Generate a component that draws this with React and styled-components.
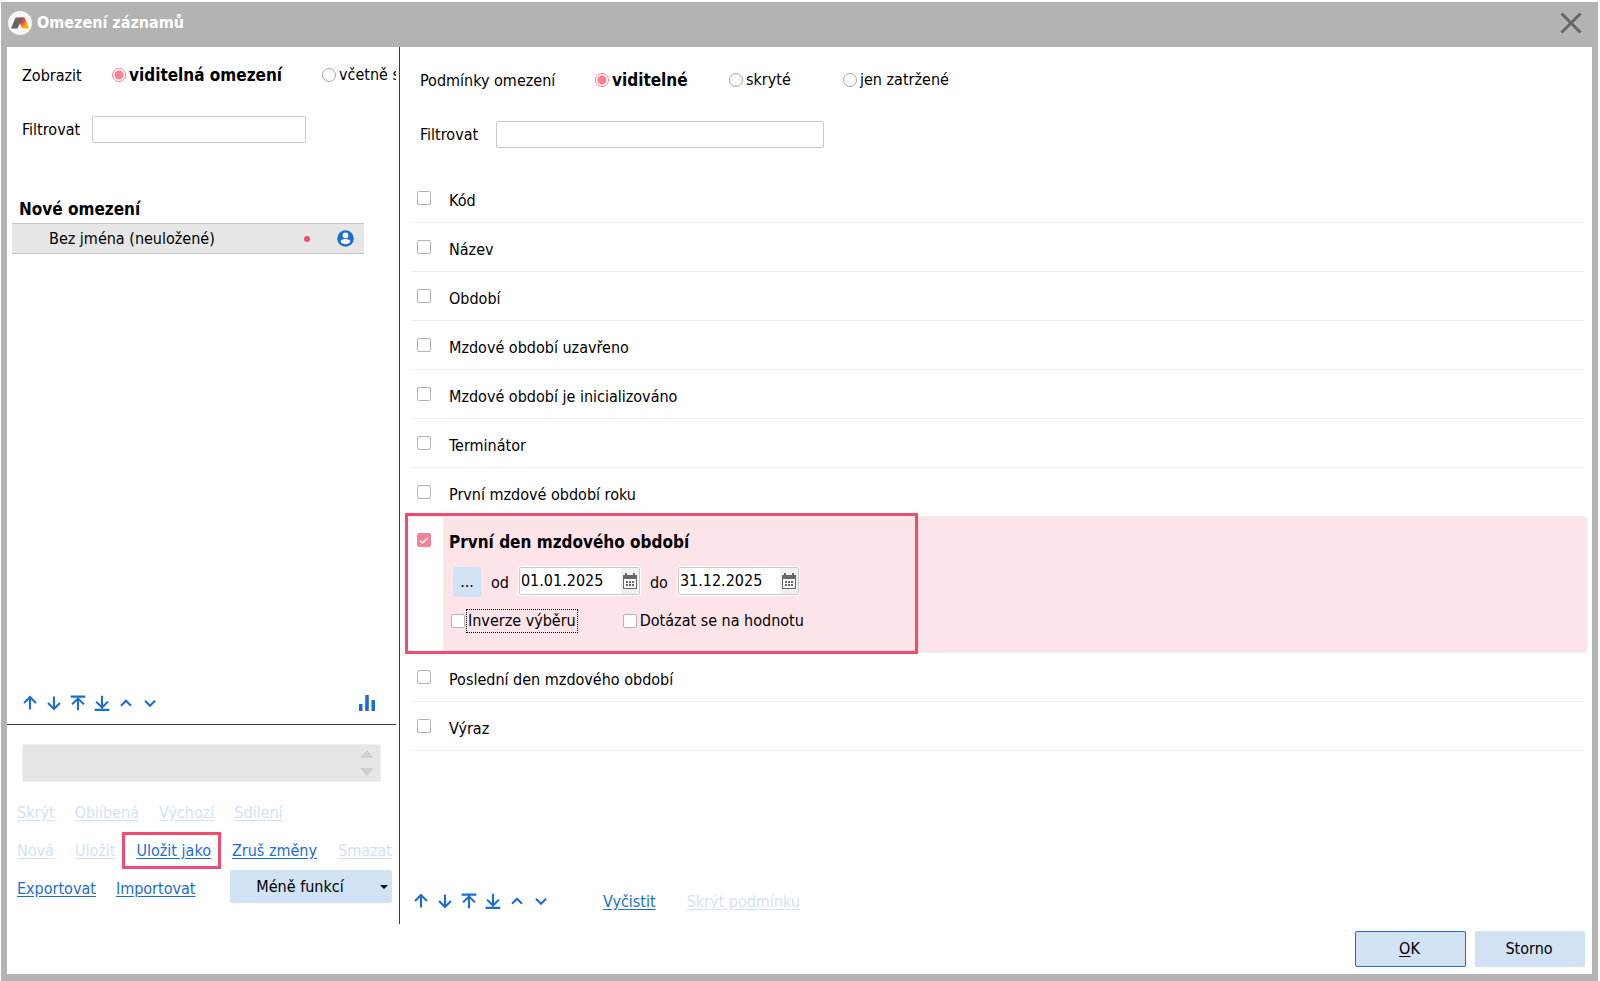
import React, { useState } from 'react';
import styled, { createGlobalStyle } from 'styled-components';

const conditionsBefore = [
  'Kód',
  'Název',
  'Období',
  'Mzdové období uzavřeno',
  'Mzdové období je inicializováno',
  'Terminátor',
  'První mzdové období roku',
];
const conditionsAfter = ['Poslední den mzdového období', 'Výraz'];

const moveIcons = [
  { name: 'Nahoru', d: 'M12 19V6M5.5 12 12 5.5 18.5 12' },
  { name: 'Dolů', d: 'M12 5v13M5.5 12l6.5 6.5 6.5-6.5' },
  { name: 'Na začátek', d: 'M4 5h16M12 20V7M5.5 13.5 12 7l6.5 6.5' },
  { name: 'Na konec', d: 'M4 19.5h16M12 4v13M5.5 10.5 12 17l6.5-6.5' },
  { name: 'Sbalit', d: 'M6.5 15l5.5-5.5 5.5 5.5' },
  { name: 'Rozbalit', d: 'M6.5 9.5l5.5 5.5 5.5-5.5' },
];

function MoveButtons() {
  return (
    <MoveGroup>
      {moveIcons.map((icon) => (
        <IconButton type="button" key={icon.name} aria-label={icon.name}>
          <svg width="22" height="22" viewBox="0 0 24 24" fill="none" stroke="#1c6dd0" strokeWidth="2.3">
            <path d={icon.d} />
          </svg>
        </IconButton>
      ))}
    </MoveGroup>
  );
}

function RadioOption({ name, label, value, onChange }) {
  return (
    <RadioLabel $active={value === label}>
      <Radio
        type="radio"
        name={name}
        checked={value === label}
        onChange={() => onChange(label)}
      />
      <span>{label}</span>
    </RadioLabel>
  );
}

function Condition({ label }) {
  return (
    <ConditionRow>
      <CheckLabel>
        <Checkbox type="checkbox" />
        <ConditionName>{label}</ConditionName>
      </CheckLabel>
    </ConditionRow>
  );
}

function DateField({ label, defaultValue }) {
  return (
    <DateBox>
      <DateInput type="text" aria-label={label} defaultValue={defaultValue} />
      <CalendarButton type="button" aria-label="Kalendář">
        <svg width="14" height="16" viewBox="0 0 14 16" shapeRendering="crispEdges">
          <path d="M0 2h14v14H0z" fill="#666" />
          <path d="M2 0h2v3H2zM10 0h2v3h-2z" fill="#666" />
          <path d="M1 6h12v9H1z" fill="#f7f7f7" />
          <path
            d="M3 8h2v2H3zM6 8h2v2H6zM9 8h2v2H9zM3 11h2v2H3zM6 11h2v2H6zM9 11h2v2H9z"
            fill="#666"
          />
        </svg>
      </CalendarButton>
    </DateBox>
  );
}

function SavedFilters() {
  const [view, setView] = useState('viditelná omezení');
  return (
    <Sidebar>
      <SideOptions>
        <span>Zobrazit</span>
        <RadioOption name="view" label="viditelná omezení" value={view} onChange={setView} />
        <RadioOption name="view" label="včetně s" value={view} onChange={setView} />
      </SideOptions>
      <SideFilter>
        <label htmlFor="filter-side">Filtrovat</label>
        <TextInput id="filter-side" type="text" />
      </SideFilter>
      <GroupTitle>Nové omezení</GroupTitle>
      <FilterItem>
        <FilterName>Bez jména (neuložené)</FilterName>
        <UnsavedDot />
        <svg width="17" height="17" viewBox="0 0 17 17">
          <circle cx="8.5" cy="8.5" r="8.3" fill="#1c6dd0" />
          <circle cx="8.5" cy="5.4" r="2.8" fill="#fff" />
          <path d="M3.6 11.6c0-1.6 2.2-2.5 4.9-2.5s4.9.9 4.9 2.5c-1 1.7-2.8 2.7-4.9 2.7s-3.9-1-4.9-2.7z" fill="#fff" />
        </svg>
      </FilterItem>
      <SideToolbar>
        <MoveButtons />
        <IconButton type="button" aria-label="Graf">
          <svg width="16" height="16" viewBox="0 0 16 16" fill="#1c6dd0">
            <path d="M0 9h3.500v7H0zM6.200 0h3.600v16H6.200zM12.500 5H16v11h-3.500z" />
          </svg>
        </IconButton>
      </SideToolbar>
      <NoteBox>
        <Note aria-label="Poznámka" disabled />
        <Spinner>
          <svg width="14" height="8" viewBox="0 0 14 8">
            <path d="M7 0l7 8H0z" fill="#cfcfcf" />
          </svg>
          <svg width="14" height="8" viewBox="0 0 14 8">
            <path d="M7 8L0 0h14z" fill="#cfcfcf" />
          </svg>
        </Spinner>
      </NoteBox>
      <LinkRows>
        <LinkRow>
          <ActionLink href="#skryt" $muted>Skrýt</ActionLink>
          <ActionLink href="#oblibena" $muted>Oblíbená</ActionLink>
          <ActionLink href="#vychozi" $muted>Výchozí</ActionLink>
          <ActionLink href="#sdileni" $muted>Sdílení</ActionLink>
        </LinkRow>
        <LinkRow $wide>
          <ActionLink href="#nova" $muted>Nová</ActionLink>
          <ActionLink href="#ulozit" $muted>Uložit</ActionLink>
          <MarkedLink href="#ulozit-jako">Uložit jako</MarkedLink>
          <ActionLink href="#zrus">Zruš změny</ActionLink>
          <ActionLink href="#smazat" $muted>Smazat</ActionLink>
        </LinkRow>
        <LinkRow>
          <ActionLink href="#export">Exportovat</ActionLink>
          <ActionLink href="#import">Importovat</ActionLink>
          <MenuButton type="button">
            <span>Méně funkcí</span>
            <svg width="8" height="4" viewBox="0 0 8 4">
              <path d="M0 0h8L4 4z" />
            </svg>
          </MenuButton>
        </LinkRow>
      </LinkRows>
    </Sidebar>
  );
}

function Conditions() {
  const [shown, setShown] = useState('viditelné');
  const [enabled, setEnabled] = useState(true);
  return (
    <Main>
      <MainOptions>
        <span>Podmínky omezení</span>
        <RadioOption name="shown" label="viditelné" value={shown} onChange={setShown} />
        <RadioOption name="shown" label="skryté" value={shown} onChange={setShown} />
        <RadioOption name="shown" label="jen zatržené" value={shown} onChange={setShown} />
      </MainOptions>
      <MainFilter>
        <label htmlFor="filter-main">Filtrovat</label>
        <TextInput id="filter-main" type="text" />
      </MainFilter>
      <ConditionList>
        {conditionsBefore.map((label) => (
          <Condition key={label} label={label} />
        ))}
        <SelectedRow>
          <Checkbox
            id="first-day"
            type="checkbox"
            checked={enabled}
            onChange={(e) => setEnabled(e.target.checked)}
          />
          <SelectedBody>
            <SelectedName htmlFor="first-day">První den mzdového období</SelectedName>
            <DateRow>
              <MoreButton type="button">...</MoreButton>
              <span>od</span>
              <DateField label="od" defaultValue="01.01.2025" />
              <span>do</span>
              <DateField label="do" defaultValue="31.12.2025" />
            </DateRow>
            <ChoiceRow>
              <ChoiceLabel $focused>
                <Checkbox type="checkbox" />
                <span>Inverze výběru</span>
              </ChoiceLabel>
              <ChoiceLabel>
                <Checkbox type="checkbox" />
                <span>Dotázat se na hodnotu</span>
              </ChoiceLabel>
            </ChoiceRow>
          </SelectedBody>
        </SelectedRow>
        {conditionsAfter.map((label) => (
          <Condition key={label} label={label} />
        ))}
      </ConditionList>
      <MainToolbar>
        <MoveButtons />
        <MainLinks>
          <ActionLink href="#vycistit">Vyčistit</ActionLink>
          <ActionLink href="#skryt-podminku" $muted>Skrýt podmínku</ActionLink>
        </MainLinks>
      </MainToolbar>
    </Main>
  );
}

export default function App() {
  return (
    <Page>
      <GlobalStyle />
      <Dialog>
        <TitleBar>
          <svg width="24" height="24" viewBox="0 0 24 24">
            <defs>
              <linearGradient id="leg" x1="0" y1="0" x2="1" y2="1">
                <stop offset="0" stopColor="#c8107a" />
                <stop offset="0.4" stopColor="#ee4a3c" />
                <stop offset="0.7" stopColor="#fbb000" />
                <stop offset="1" stopColor="#fbb000" />
              </linearGradient>
            </defs>
            <circle cx="12" cy="12" r="12" fill="#f8f8f8" />
            <path d="M12 6.500h4.500L21 17.500h-6.500L11 11z" fill="url(#leg)" />
            <path d="M7.500 6.500h7L9.500 17.500H3z" fill="#666" />
          </svg>
          <Title>Omezení záznamů</Title>
          <CloseButton type="button" aria-label="Zavřít">
            <svg width="22" height="22" viewBox="0 0 22 22" stroke="#666" strokeWidth="3">
              <path d="M1.500 1.500l19 19M20.500 1.500l-19 19" />
            </svg>
          </CloseButton>
        </TitleBar>
        <Columns>
          <SavedFilters />
          <Conditions />
        </Columns>
        <Footer>
          <DialogButton type="button" $primary>
            <u>O</u>K
          </DialogButton>
          <DialogButton type="button">Storno</DialogButton>
        </Footer>
      </Dialog>
    </Page>
  );
}

const GlobalStyle = createGlobalStyle`
  *, *::after {
    box-sizing: border-box;
  }
  body {
    margin: 0;
    background: #fff;
  }
  body, button, input, textarea {
    color: #000;
    font-family: Tahoma, 'DejaVu Sans Condensed', 'DejaVu Sans', sans-serif;
    font-size: 16px;
    line-height: 22px;
  }
  svg {
    display: block;
    flex: none;
  }
`;

const Page = styled.div`
  min-height: 100vh;
  padding: 2px 2px 0 1px;
  display: flex;
`;

const Dialog = styled.div`
  flex: 1;
  min-width: 0;
  display: flex;
  flex-direction: column;
  border: solid #b3b3b3;
  border-width: 0 6px 7px;
`;

const TitleBar = styled.header`
  height: 45px;
  padding: 0 10px 4px 1px;
  display: flex;
  align-items: center;
  gap: 5px;
  background: #b3b3b3;
`;

const Title = styled.h1`
  flex: 1;
  margin: 0;
  color: #fff;
  font-size: 16px;
  line-height: 22px;
`;

const CloseButton = styled.button`
  padding: 0;
  border: none;
  background: none;
`;

const Columns = styled.div`
  flex: 1;
  display: flex;
  gap: 3px;
`;

const Sidebar = styled.aside`
  flex: none;
  width: 389px;
  display: flex;
  flex-direction: column;
  overflow: hidden;
`;

const Main = styled.main`
  flex: 1;
  min-width: 0;
  display: flex;
  flex-direction: column;
  border-left: 1px solid #3c3c3c;
`;

const Options = styled.div`
  display: grid;
  align-items: center;
  height: 24px;
  white-space: nowrap;
  > span {
    padding-top: 2px;
  }
`;

const SideOptions = styled(Options)`
  grid-template-columns: 90px 210px auto;
  margin: 16px 0 0 15px;
`;

const MainOptions = styled(Options)`
  grid-template-columns: 175px 134px 114px auto;
  margin: 21px 0 0 20px;
`;

const RadioLabel = styled.label`
  display: flex;
  align-items: center;
  gap: 3px;
  font-size: ${(props) => (props.$active ? '17px' : '16px')};
  font-weight: ${(props) => (props.$active ? 'bold' : 'normal')};
`;

const Radio = styled.input`
  appearance: none;
  flex: none;
  width: 14px;
  height: 14px;
  margin: 0;
  border: 1px solid #a6a6a6;
  border-radius: 50%;
  background: #fff;
  &:checked {
    border-color: #f78296;
    background: radial-gradient(circle, #f78296 4px, #fff 5px);
  }
`;

const Filter = styled.div`
  display: grid;
  align-items: start;
  height: 28px;
  margin-top: 29px;
  label {
    padding-top: 3px;
  }
`;

const SideFilter = styled(Filter)`
  grid-template-columns: 70px 214px;
  margin-left: 15px;
`;

const MainFilter = styled(Filter)`
  grid-template-columns: 76px 328px;
  margin-left: 20px;
`;

const TextInput = styled.input`
  width: 100%;
  height: 27px;
  padding: 0 4px;
  border: 1px solid #c9c9c9;
  border-radius: 2px;
`;

const GroupTitle = styled.h2`
  margin: 51px 0 0 12px;
  font-size: 17px;
  line-height: 28px;
`;

const FilterItem = styled.div`
  height: 31px;
  margin: 0 32px 0 5px;
  padding: 0 10px 0 37px;
  display: flex;
  align-items: center;
  border: solid #c9c9c9;
  border-width: 1px 0;
  background: #e6e6e6;
`;

const FilterName = styled.span`
  flex: 1;
`;

const UnsavedDot = styled.span`
  width: 6px;
  height: 6px;
  margin-right: 27px;
  border-radius: 50%;
  background: #f44a6c;
`;

const SideToolbar = styled.div`
  height: 41px;
  margin-top: auto;
  padding: 0 17px 2px 11px;
  display: flex;
  align-items: center;
  justify-content: space-between;
  border-bottom: 1px solid #3c3c3c;
`;

const MoveGroup = styled.div`
  display: flex;
`;

const IconButton = styled.button`
  min-width: 24px;
  padding: 0;
  display: flex;
  justify-content: center;
  border: none;
  background: none;
`;

const NoteBox = styled.div`
  height: 38px;
  margin: 19px 15px 0;
  display: flex;
  border: 1px solid #eee;
  border-radius: 2px;
  background: #e6e6e6;
`;

const Note = styled.textarea`
  flex: 1;
  height: 36px;
  padding: 0;
  border: none;
  background: none;
  resize: none;
`;

const Spinner = styled.div`
  width: 26px;
  padding: 5px 0;
  display: flex;
  flex-direction: column;
  align-items: center;
  justify-content: space-between;
`;

const LinkRows = styled.div`
  padding: 11px 4px 17px 10px;
`;

const LinkRow = styled.div`
  height: 38px;
  display: flex;
  align-items: flex-start;
  gap: ${(props) => (props.$wide ? '21px' : '20px')};
  white-space: nowrap;
  > a {
    margin-top: 9px;
  }
`;

const ActionLink = styled.a`
  color: ${(props) => (props.$muted ? '#d2e3f5' : '#1c6dd0')};
  text-decoration: underline;
  text-underline-offset: 2px;
`;

const MarkedLink = styled(ActionLink)`
  position: relative;
  &::after {
    content: '';
    position: absolute;
    inset: -8px -10px -7px -14px;
    border: 3px solid #f04c6f;
  }
`;

const MenuButton = styled.button`
  width: 162px;
  height: 33px;
  margin-top: 1px;
  margin-left: auto;
  padding: 0 4px 0 0;
  display: flex;
  align-items: center;
  border: none;
  border-radius: 2px;
  background: #d1e2f4;
  span {
    flex: 1;
    padding-left: 10px;
    padding-right: 20px;
  }
`;

const ConditionList = styled.div`
  margin-top: 25px;
  padding: 0 5px 0 11px;
`;

const ConditionRow = styled.div`
  height: 49px;
  margin-right: 3px;
  padding: 15px 0 0 6px;
  border-bottom: 1px solid #eee;
`;

const CheckLabel = styled.label`
  display: inline-flex;
  gap: 18px;
`;

const Checkbox = styled.input`
  appearance: none;
  flex: none;
  width: 14px;
  height: 14px;
  margin: 1px 0 0;
  border: 1px solid #b3b3b3;
  border-radius: 2px;
  background: #fff;
  &:checked {
    border-color: #f78296;
    background: #f78296
      url("data:image/svg+xml,%3Csvg xmlns='http://www.w3.org/2000/svg' viewBox='0 0 12 12'%3E%3Cpath d='M2 6.500l2.500 2.500L10 3.500' fill='none' stroke='white' stroke-width='1.500'/%3E%3C/svg%3E");
  }
`;

const ConditionName = styled.span`
  line-height: 22px;
`;

const SelectedRow = styled.div`
  position: relative;
  display: flex;
  gap: 12px;
  height: 136px;
  padding-left: 6px;
  border-bottom: 1px solid #eee;
  > input {
    margin-top: 16px;
  }
  &::after {
    content: '';
    position: absolute;
    top: -4px;
    left: -6px;
    width: 513px;
    height: 141px;
    border: 3px solid #f04c6f;
    pointer-events: none;
  }
`;

const SelectedBody = styled.div`
  flex: 1;
  padding: 14px 6px 0;
  background: #fce4e8;
`;

const SelectedName = styled.label`
  display: block;
  font-size: 17px;
  font-weight: bold;
`;

const DateRow = styled.div`
  height: 30px;
  margin: 14px 0 12px 4px;
  display: flex;
  align-items: flex-start;
  gap: 10px;
  > span {
    margin-top: 5px;
  }
`;

const MoreButton = styled.button`
  width: 28px;
  height: 30px;
  padding: 0;
  border: none;
  border-radius: 2px;
  background: #d1e2f4;
`;

const DateBox = styled.div`
  width: 121px;
  height: 28px;
  display: flex;
  border: 1px solid #c9c9c9;
  border-radius: 2px;
  outline: 1px solid #fff;
  background: #fff;
`;

const DateInput = styled.input`
  flex: 1;
  min-width: 0;
  padding: 0 2px 1px 1px;
  border: none;
  background: none;
`;

const CalendarButton = styled.button`
  width: 18px;
  padding: 0;
  display: flex;
  align-items: center;
  justify-content: center;
  border: none;
  background: #f0f0f0;
`;

const ChoiceRow = styled.div`
  display: flex;
  gap: 45px;
  margin-left: 2px;
`;

const ChoiceLabel = styled.label`
  display: flex;
  align-items: center;
  gap: 1px;
  input {
    margin: 0;
  }
  span {
    padding: 0 1px;
    border: 1px dotted ${(props) => (props.$focused ? '#000' : 'transparent')};
  }
`;

const MainToolbar = styled.div`
  height: 46px;
  margin-top: auto;
  padding-left: 9px;
  display: flex;
  align-items: center;
`;

const MainLinks = styled.div`
  margin-left: 50px;
  padding-top: 2px;
  display: flex;
  gap: 31px;
`;

const Footer = styled.footer`
  padding: 7px;
  display: flex;
  justify-content: flex-end;
  gap: 9px;
`;

const DialogButton = styled.button`
  width: ${(props) => (props.$primary ? '111px' : '110px')};
  height: 36px;
  padding: 0 2px 0 0;
  border: 1px solid ${(props) => (props.$primary ? '#1c6dd0' : '#d1e2f4')};
  border-radius: 2px;
  background: #d1e2f4;
  u {
    text-underline-offset: 2px;
  }
`;
